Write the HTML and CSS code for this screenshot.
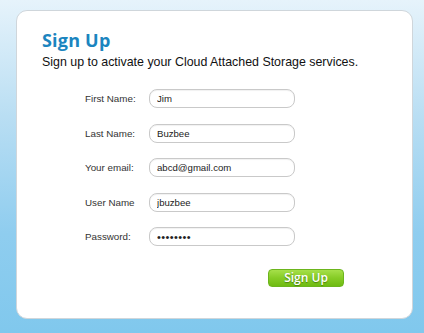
FILE: index.html
```html
<!DOCTYPE html>
<html lang="en">
<head>
    <meta charset="utf-8">
    <title>Sign Up</title>
    <meta name="viewport" content="width=device-width, initial-scale=1">
    <link rel="stylesheet" href="styles.css">
</head>
<body>
    <div class="card">
        <h1>Sign Up</h1>
        <p class="intro">Sign up to activate your Cloud Attached Storage services.</p>
        <form action="/signup" method="POST" class="signup-form">
            <label for="firstName">First Name:</label>
            <input type="text" id="firstName" name="firstName" value="Jim">

            <label for="lastName">Last Name:</label>
            <input type="text" id="lastName" name="lastName" value="Buzbee">

            <label for="email">Your email:</label>
            <input type="email" id="email" name="email" value="abcd@gmail.com">

            <label for="userName">User Name</label>
            <input type="text" id="userName" name="userName" value="jbuzbee">

            <label for="password">Password:</label>
            <input type="password" id="password" name="password" value="password">

            <div class="actions">
                <button type="submit">Sign Up</button>
            </div>
        </form>
    </div>
</body>
</html>
```

FILE: styles.css
```css
:root {
    --title-color: #1b85bf;
    --text-color: #111;
    --label-color: #333;
    --border-color: #c9c9c9;
}

* {
    margin: 0;
    padding: 0;
    box-sizing: border-box;
}

html, body {
    height: 100%;
}

body {
    font-family: 'Liberation Sans', Arial, sans-serif;
    color: var(--text-color);
    background: linear-gradient(to bottom, #e6f3fb 0%, #b9def3 35%, #8fcdef 70%, #80c8ed 100%);
    padding: 10px 11px 0 16px;
    overflow: hidden;
}

.card {
    width: 397px;
    height: 309px;
    background-color: #fff;
    border: 1px solid #cfd6db;
    border-radius: 11px;
    padding: 17px 0 0 25px;
}

h1 {
    font-family: 'Open Sans', 'DejaVu Sans', sans-serif;
    font-size: 18px;
    font-weight: 700;
    line-height: 24px;
    color: var(--title-color);
    letter-spacing: 0.2px;
}

.intro {
    font-size: 12.4px;
    line-height: 16px;
    margin-top: 2px;
}

.signup-form {
    display: grid;
    grid-template-columns: 64px 146px;
    row-gap: 15.5px;
    align-items: center;
    margin: 19px 0 0 43px;
}

label {
    font-size: 9.8px;
    color: var(--label-color);
}

input {
    width: 146px;
    height: 19px;
    border: 1px solid var(--border-color);
    border-radius: 8px;
    padding: 0 7px;
    font-family: 'Liberation Sans', Arial, sans-serif;
    font-size: 9.6px;
    color: #222;
    background-color: #fff;
    box-shadow: inset 0 1px 1px rgba(0, 0, 0, 0.06);
}

input:focus {
    outline: none;
}

input[type="password"] {
    font-size: 11px;
    letter-spacing: 0.4px;
}

.actions {
    grid-column: 1 / -1;
    display: flex;
    justify-content: flex-end;
    margin-top: 7px;
    margin-right: -49px;
}

button {
    width: 76px;
    height: 18px;
    border: 1px solid #6cb51d;
    border-radius: 4px;
    background: linear-gradient(to bottom, #a6e04a 0%, #86cc26 50%, #6fbb12 100%);
    color: #fff;
    font-family: 'Open Sans', 'DejaVu Sans', sans-serif;
    font-size: 12px;
    font-weight: 600;
    line-height: 16px;
    text-shadow: 0 1px 1px rgba(40, 90, 0, 0.6);
    cursor: pointer;
}
```
